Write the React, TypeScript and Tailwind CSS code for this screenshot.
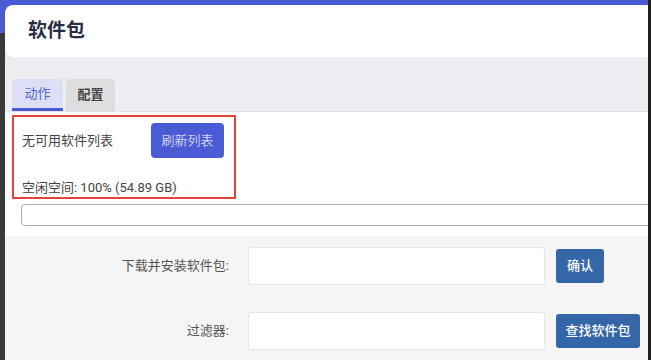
import React from "react";

const cjk = { fontFamily: 'Roboto, "Noto Sans CJK SC", sans-serif' };

// Tab header above the package panel
function Tabs() {
  return (
    <div className="flex items-end pl-[7px] pt-[22px] bg-[#eceef2] border-b border-[#dfe1e6]">
      <div className="w-[51px] h-[32px] rounded-t-[4px] bg-[#dcdff5] border-b-[3px] border-[#4a5bd4] flex items-center justify-center text-[13px] text-[#5566cc]">
        动作
      </div>
      <div className="ml-[3px] w-[49px] h-[32px] rounded-t-[4px] bg-[#dedede] flex items-center justify-center text-[13px] font-bold text-[#444]">
        配置
      </div>
    </div>
  );
}

function FormRow({ label, button, buttonWidth, top }: { label: string; button: string; buttonWidth: string; top: string }) {
  return (
    <div className={`flex items-center ${top}`}>
      <div className="w-[224px] shrink-0 text-right text-[13px] text-[#555]">{label}</div>
      <div className="ml-[19px] w-[297px] shrink-0 h-[38px] bg-white border border-[#e6e6e6] rounded-[3px]" />
      <button className={`ml-[11px] shrink-0 ${buttonWidth} h-[34px] rounded-[3px] bg-[#3566a8] text-white text-[13px] font-medium`}>
        {button}
      </button>
    </div>
  );
}

export default function App() {
  return (
    <div className="w-[651px] h-[360px] overflow-hidden flex" style={cjk}>
      {/* left strip */}
      <div className="w-[5px] shrink-0 flex flex-col">
        <div className="h-[33px] bg-[#4a5bd6]" />
        <div className="flex-1 bg-[#3a3a3a]" />
      </div>

      <div className="flex-1 min-w-0 overflow-hidden flex flex-col border-r-[3px] border-[#1e1e1e] bg-[#f5f5f5]">
        {/* header */}
        <div className="pt-[5px] bg-[linear-gradient(#4a5bd6_0_33px,#eceef2_33px)]">
          <div className="h-[52px] bg-white rounded-l-[8px] flex items-center pl-[23px] shadow-[0_1px_2px_rgba(0,0,0,0.04)]">
            <h1 className="text-[19px] font-bold text-[#2b2d42]">软件包</h1>
          </div>
        </div>

        <Tabs />

        {/* actions panel */}
        <div className="bg-white h-[124px] pl-[7px] pt-[3px] overflow-hidden">
          <div className="w-[224px] h-[84px] border-2 border-[#e0443a] px-[8px] pt-[6px]">
            <div className="flex items-center">
              <span className="text-[13px] text-[#444]">无可用软件列表</span>
              <button className="ml-auto mr-[2px] w-[73px] h-[35px] rounded-[4px] bg-[#4a5bd6] text-white text-[13px] font-light">
                刷新列表
              </button>
            </div>
            <div className="mt-[20px] text-[13px] text-[#444]">空闲空间: 100% (54.89 GB)</div>
          </div>
          <div className="ml-[9px] mt-[5px] w-[640px] h-[22px] border-[1.5px] border-[#b0b0b0] rounded-[4px] bg-white" />
        </div>

        {/* download / filter form */}
        <FormRow label="下载并安装软件包:" button="确认" buttonWidth="w-[48px]" top="mt-[11px]" />
        <FormRow label="过滤器:" button="查找软件包" buttonWidth="w-[84px]" top="mt-[27px]" />
      </div>
    </div>
  );
}
